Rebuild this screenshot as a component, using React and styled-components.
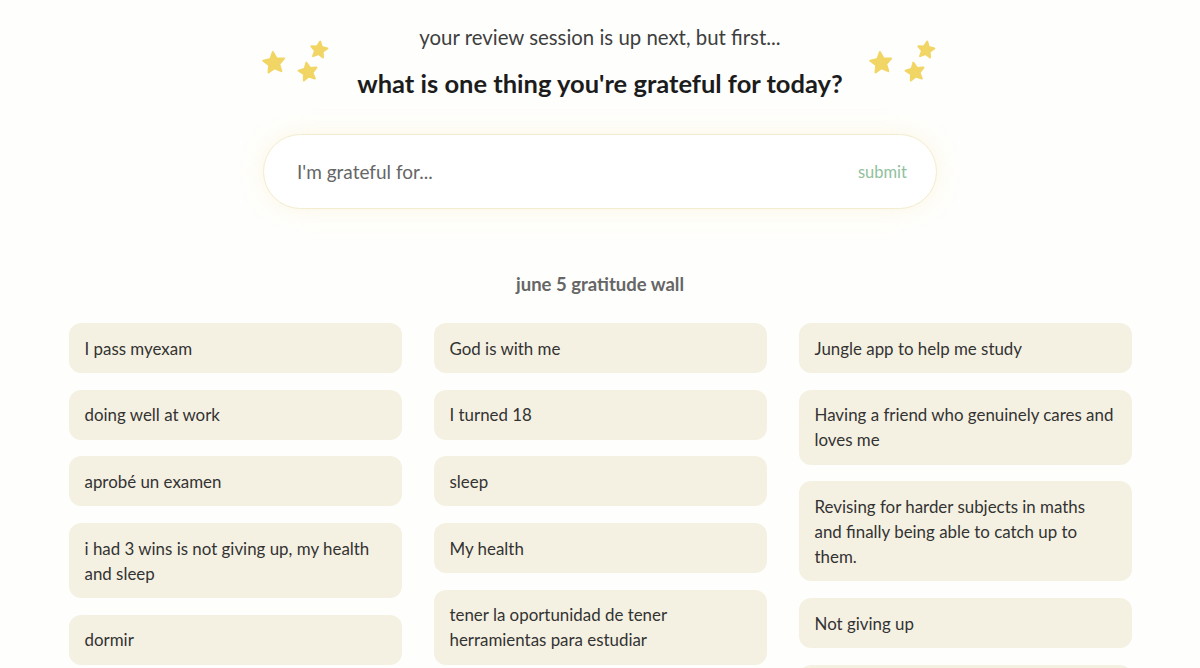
import React from 'react'
import styled, { createGlobalStyle } from 'styled-components'

const GlobalStyle = createGlobalStyle`
  html, body {
    margin: 0;
    padding: 0;
    background: #fefefc;
    font-family: Lato, "Open Sans", sans-serif;
  }
`

const columns = [
  [
    'I pass myexam',
    'doing well at work',
    'aprobé un examen',
    'i had 3 wins is not giving up, my health and sleep',
    'dormir',
  ],
  [
    'God is with me',
    'I turned 18',
    'sleep',
    'My health',
    'tener la oportunidad de tener herramientas para estudiar',
  ],
  [
    'Jungle app to help me study',
    'Having a friend who genuinely cares and loves me',
    'Revising for harder subjects in maths and finally being able to catch up to them.',
    'Not giving up',
    '',
  ],
]

const starPoints = (cx, cy, r) => {
  const pts = []
  for (let i = 0; i < 10; i++) {
    const rad = i % 2 === 0 ? r : r * 0.48
    const a = (Math.PI / 5) * i - Math.PI / 2
    pts.push(`${(cx + rad * Math.cos(a)).toFixed(2)},${(cy + rad * Math.sin(a)).toFixed(2)}`)
  }
  return pts.join(' ')
}

const Star = ({ cx, cy, r, rot }) => (
  <polygon
    points={starPoints(cx, cy, r)}
    transform={`rotate(${rot} ${cx} ${cy})`}
    fill="#f1d565"
    stroke="#f1d565"
    strokeWidth="2"
    strokeLinejoin="round"
  />
)

const StarCluster = () => (
  <Stars viewBox="0 0 74 46" width="74" height="46">
    <Star cx={14} cy={26} r={11} rot={-6} />
    <Star cx={59} cy={13} r={8.5} rot={8} />
    <Star cx={48} cy={35} r={9.5} rot={-10} />
  </Stars>
)

export default function App() {
  return (
    <Page>
      <GlobalStyle />
      <Header>
        <StarCluster />
        <HeadText>
          <Lead>your review session is up next, but first...</Lead>
          <Question>what is one thing you're grateful for today?</Question>
        </HeadText>
        <StarCluster />
      </Header>

      <InputPill>
        <Placeholder>I'm grateful for...</Placeholder>
        <Submit>submit</Submit>
      </InputPill>

      <WallTitle>june 5 gratitude wall</WallTitle>

      <Wall>
        {columns.map((col, i) => (
          <Column key={i}>
            {col.map((t, j) => (
              <Card key={j}>{t}</Card>
            ))}
          </Column>
        ))}
      </Wall>
    </Page>
  )
}

const Page = styled.div`
  height: 668px;
  overflow: hidden;
  display: flex;
  flex-direction: column;
  align-items: center;
  padding-top: 23px;
  box-sizing: border-box;

  & > * {
    flex-shrink: 0;
  }
`

const Header = styled.div`
  display: flex;
  align-items: flex-start;
  justify-content: center;
`

const Stars = styled.svg`
  display: block;
  margin-top: 14px;
`

const HeadText = styled.div`
  width: 533px;
  display: flex;
  flex-direction: column;
  align-items: center;
`

const Lead = styled.div`
  font-size: 20.4px;
  line-height: 28px;
  color: #3f3f3f;
`

const Question = styled.div`
  margin-top: 16px;
  font-size: 25.5px;
  line-height: 32px;
  font-weight: 700;
  color: #1c1c1c;
`

const InputPill = styled.div`
  margin-top: 35px;
  width: 674px;
  height: 75px;
  box-sizing: border-box;
  border: 1px solid #f4eccf;
  border-radius: 40px;
  background: #ffffff;
  box-shadow: 0 0 22px rgba(246, 232, 180, 0.35);
  display: flex;
  align-items: center;
  justify-content: space-between;
  padding: 0 29px 0 33px;
`

const Placeholder = styled.span`
  font-size: 19px;
  color: #666;
`

const Submit = styled.span`
  font-size: 16.5px;
  color: #8fc19d;
`

const WallTitle = styled.div`
  margin-top: 63px;
  font-size: 18.5px;
  line-height: 24px;
  font-weight: 700;
  color: #666;
`

const Wall = styled.div`
  margin-top: 27px;
  width: 1063px;
  display: grid;
  grid-template-columns: repeat(3, 1fr);
  column-gap: 32px;
  align-items: start;
`

const Column = styled.div`
  display: flex;
  flex-direction: column;
  gap: 16.7px;
`

const Card = styled.div`
  background: #f5f1e2;
  border-radius: 12px;
  padding: 12.5px 16px;
  min-height: 25px;
  font-size: 16.9px;
  line-height: 25px;
  color: #333;
`
